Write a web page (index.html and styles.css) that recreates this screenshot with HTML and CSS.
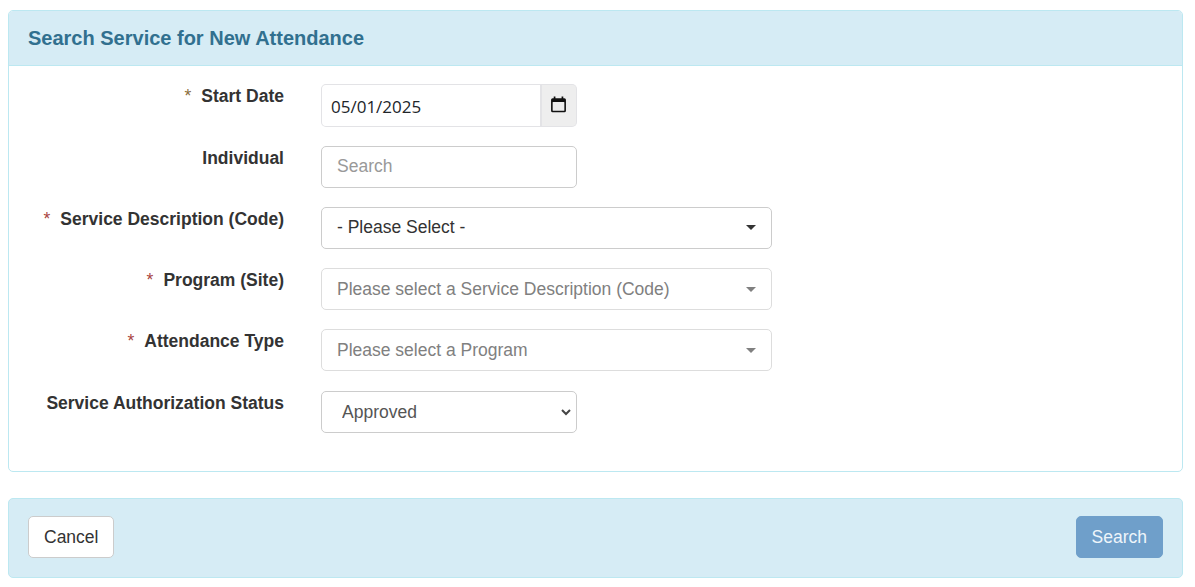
FILE: index.html
```html
<!DOCTYPE html>
<html>
<head>
<meta charset="UTF-8">
<title>Search Service for New Attendance</title>
<link rel="stylesheet" href="styles.css">
</head>
<body>

<div class="panel search_panel">
	<div class="panel_heading">
		<h3>Search Service for New Attendance</h3>
	</div>
	<form class="panel_body">
		<div class="form_row">
			<label><span class="req req_date">*</span>Start Date</label>
			<div class="date_group">
				<input type="text" class="date_input" value="05/01/2025">
				<span class="date_addon">
					<svg class="cal_icon" width="17" height="17" viewBox="0 0 16 16">
						<path d="M3.5 0.5h1.6v1.6h5.8V0.5h1.6v1.6h1A1.5 1.5 0 0 1 15 3.6v10.3a1.5 1.5 0 0 1-1.5 1.5h-11A1.5 1.5 0 0 1 1 13.9V3.6a1.5 1.5 0 0 1 1.5-1.5h1z" fill="#111"/>
						<rect x="2.5" y="5.6" width="11" height="8.3" rx="0.5" fill="#eeeeee"/>
					</svg>
				</span>
			</div>
		</div>
		<div class="form_row">
			<label>Individual</label>
			<input type="text" class="control short search_input" placeholder="Search">
		</div>
		<div class="form_row">
			<label><span class="req">*</span>Service Description (Code)</label>
			<div class="combo">
				<span>- Please Select -</span>
				<i class="caret"></i>
			</div>
		</div>
		<div class="form_row">
			<label><span class="req">*</span>Program (Site)</label>
			<div class="combo disabled">
				<span>Please select a Service Description (Code)</span>
				<i class="caret"></i>
			</div>
		</div>
		<div class="form_row row_last">
			<label><span class="req">*</span>Attendance Type</label>
			<div class="combo disabled">
				<span>Please select a Program</span>
				<i class="caret"></i>
			</div>
		</div>
		<div class="form_row">
			<label>Service Authorization Status</label>
			<select class="control short status_select">
				<option>Approved</option>
			</select>
		</div>
	</form>
</div>

<div class="panel action_panel">
	<button type="button" class="btn btn_cancel">Cancel</button>
	<button type="button" class="btn btn_search">Search</button>
</div>

</body>
</html>
```

FILE: styles.css
```css
* {
	box-sizing: border-box;
}
body {
	margin: 0;
	padding: 10px 12px 0 8px;
	background-color: #ffffff;
	font-family: "Liberation Sans", Arial, sans-serif;
	font-size: 17.5px;
	color: #333333;
}
.panel {
	border: 1px solid #bce8f1;
	border-radius: 5px;
}
.search_panel {
	height: 462px;
}
.panel_heading {
	height: 55px;
	padding: 0 19px;
	display: flex;
	align-items: center;
	background-color: #d6ecf5;
	border-bottom: 1px solid #bce8f1;
	border-radius: 4px 4px 0 0;
}
.panel_heading h3 {
	margin: 0;
	font-size: 20px;
	font-weight: bold;
	color: #31708f;
}
.panel_body {
	padding: 18px 0 0 0;
}
.form_row {
	display: grid;
	grid-template-columns: 275px auto;
	column-gap: 37px;
	justify-content: start;
	margin-bottom: 19px;
}
.row_last {
	margin-bottom: 20px;
}
label {
	display: block;
	padding-top: 2px;
	text-align: right;
	font-size: 17.5px;
	font-weight: bold;
	color: #333333;
}
.req {
	margin-right: 10px;
	font-weight: normal;
	color: #a94442;
}
.req_date {
	color: #8a6d3b;
}
.date_group {
	display: flex;
	width: 256px;
	height: 43px;
}
.date_input {
	width: 221px;
	padding: 1px 9px 0;
	border: 1px solid #e3e3e6;
	border-right: 2px solid #e3e3e6;
	border-radius: 5px 0 0 5px;
	font-family: "Open Sans", sans-serif;
	font-size: 17px;
	color: #212529;
	outline: none;
}
.date_addon {
	width: 35px;
	display: flex;
	align-items: center;
	justify-content: center;
	background-color: #eeeeee;
	border: 1px solid #e3e3e6;
	border-left: 0;
	border-radius: 0 5px 5px 0;
}
.cal_icon {
	margin: -2px 0 0 -1px;
}
.control {
	height: 42px;
	padding: 0 15px;
	border: 1px solid #cccccc;
	border-radius: 5px;
	background-color: #ffffff;
	font-family: "Liberation Sans", Arial, sans-serif;
	font-size: 17.5px;
	color: #555555;
	outline: none;
}
.control::placeholder {
	color: #999999;
	opacity: 1;
}
.short {
	width: 256px;
}
.search_input {
	padding-bottom: 2px;
}
.status_select {
	padding-left: 20px;
	appearance: none;
	background-image: url("data:image/svg+xml,%3Csvg xmlns='http://www.w3.org/2000/svg' width='10' height='7'%3E%3Cpath d='M1 1l4 4 4-4' fill='none' stroke='%23444' stroke-width='2'/%3E%3C/svg%3E");
	background-repeat: no-repeat;
	background-position: 239px 17px;
}
.combo {
	width: 451px;
	height: 42px;
	padding: 0 15px 2px 15px;
	display: flex;
	align-items: center;
	justify-content: space-between;
	border: 1px solid #cccccc;
	border-radius: 5px;
	color: #333333;
}
.combo.disabled {
	padding-bottom: 0;
	border-color: #dddddd;
	color: #808080;
}
.caret {
	width: 0;
	height: 0;
	border-top: 5px solid #333333;
	border-left: 5px solid transparent;
	border-right: 5px solid transparent;
}
.combo.disabled .caret {
	border-top-color: #808080;
}
.action_panel {
	height: 80px;
	margin-top: 26px;
	padding: 17px 19px 0;
	display: flex;
	align-items: flex-start;
	justify-content: space-between;
	background-color: #d6ecf5;
}
.btn {
	height: 42px;
	padding: 0 15px;
	border: 1px solid #cccccc;
	border-radius: 5px;
	font-family: "Liberation Sans", Arial, sans-serif;
	font-size: 17.5px;
}
.btn_cancel {
	background-color: #ffffff;
	color: #333333;
}
.btn_search {
	background-color: #6f9fca;
	border-color: #6f9fca;
	color: #eef5fa;
}
```
